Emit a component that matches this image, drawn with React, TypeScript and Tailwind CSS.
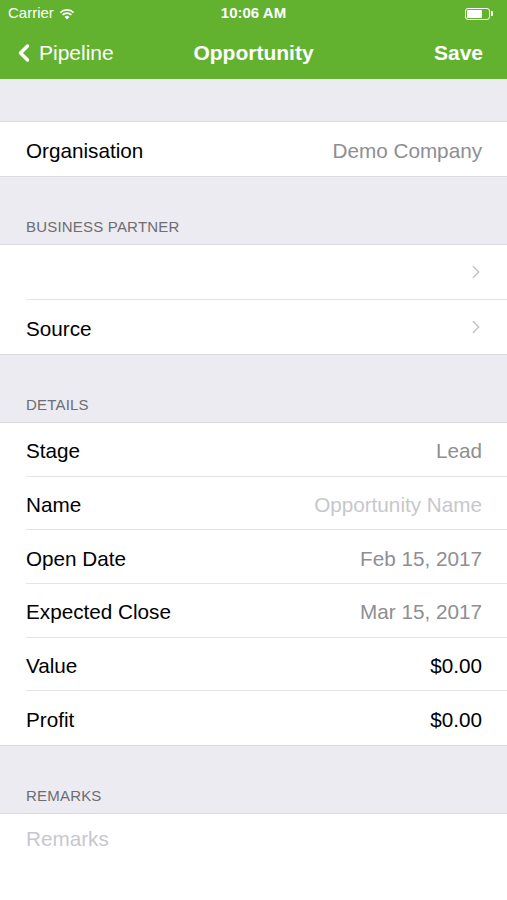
import { ChevronLeft, ChevronRight } from "lucide-react";

interface Row {
  label: string;
  value: string;
  tone: "dark" | "gray" | "hint";
}

const details: Row[] = [
  { label: "Stage", value: "Lead", tone: "gray" },
  { label: "Name", value: "Opportunity Name", tone: "hint" },
  { label: "Open Date", value: "Feb 15, 2017", tone: "gray" },
  { label: "Expected Close", value: "Mar 15, 2017", tone: "gray" },
  { label: "Value", value: "$0.00", tone: "dark" },
  { label: "Profit", value: "$0.00", tone: "dark" },
];

const toneClass = {
  dark: "text-black",
  gray: "text-[#8e8e93]",
  hint: "text-[#c7c7cd]",
};

function SectionHeader({ title }: { title: string }) {
  return (
    <div className="h-[68px] bg-[#ebebf1] px-[26px] flex items-end pb-[6px] border-b border-[#dcdce0]">
      <span className="text-[15px] text-[#6d6d72] tracking-[0.2px]">{title}</span>
    </div>
  );
}

function Cell({
  label,
  value,
  tone = "gray",
  chevron,
  last,
  h = "h-[55px]",
}: {
  label: string;
  value?: string;
  tone?: "dark" | "gray" | "hint";
  chevron?: boolean;
  last?: boolean;
  h?: string;
}) {
  return (
    <div className={`bg-white pl-[26px] ${h}`}>
      <div
        className={`flex items-center justify-between h-full pr-[25px] ${
          last ? "" : "border-b border-[#e4e4e8]"
        }`}
      >
        <span className="text-[20.7px] text-black pt-[3px]">{label}</span>
        {chevron ? (
          <ChevronRight className="w-[22px] h-[22px] text-[#c4c4c9] -mr-[5px]" strokeWidth={1.7} />
        ) : (
          <span className={`text-[20.7px] pt-[3px] ${toneClass[tone]}`}>{value}</span>
        )}
      </div>
    </div>
  );
}

export default function App() {
  return (
    <main
      className="w-[507px] h-[900px] bg-white overflow-hidden"
      style={{ fontFamily: "'Liberation Sans', Arial, sans-serif" }}
    >
      {/* Status bar + nav */}

      <div className="bg-[#62b22f] text-white">
        <div className="h-[27px] flex items-center justify-between px-[8px] text-[15px]">
          <div className="flex items-center gap-[5px] w-[150px]">
            <span>Carrier</span>
            <svg width="16" height="12" viewBox="0 0 16 12">
              <path d="M8 11.5 L5.6 8.9 A3.4 3.4 0 0 1 10.4 8.9 Z" fill="white" />
              <path d="M3.6 6.9 A6.3 6.3 0 0 1 12.4 6.9" stroke="white" strokeWidth="1.6" fill="none" />
              <path d="M1.4 4.6 A9.4 9.4 0 0 1 14.6 4.6" stroke="white" strokeWidth="1.6" fill="none" />
            </svg>
          </div>
          <span className="font-bold">10:06 AM</span>
          <div className="w-[150px] flex justify-end items-center pr-[6px]">
            <div className="w-[25px] h-[12px] border border-white rounded-[3px] p-[1px]">
              <div className="w-[15px] h-full bg-white rounded-[1px]" />
            </div>
            <div className="w-[2px] h-[5px] bg-white rounded-r-[1px] ml-[1px]" />
          </div>
        </div>

        <div className="h-[52px] flex items-center justify-between px-[12px] relative">
          <div className="flex items-center text-[21px]">
            <ChevronLeft className="w-[28px] h-[32px] -ml-[2px]" strokeWidth={3} />
            <span className="ml-[1px]">Pipeline</span>
          </div>
          <span className="absolute left-0 right-0 text-center text-[21px] font-bold pointer-events-none">
            Opportunity
          </span>
          <span className="text-[21px] font-bold pr-[12px]">Save</span>
        </div>
      </div>

      {/* Organisation */}

      <div className="h-[43px] bg-[#ebebf1] border-b border-[#dcdce0]" />

      <div className="border-b border-[#dcdce0]">
        <Cell label="Organisation" value="Demo Company" last h="h-[54px]" />
      </div>

      {/* Business partner */}

      <SectionHeader title="BUSINESS PARTNER" />

      <Cell label="" chevron />
      <div className="border-b border-[#dcdce0]">
        <Cell label="Source" chevron last h="h-[54px]" />
      </div>

      {/* Details */}

      <SectionHeader title="DETAILS" />

      <div className="border-b border-[#dcdce0]">
        {details.map((row, i) => (
          <Cell
            key={row.label}
            label={row.label}
            value={row.value}
            tone={row.tone}
            last={i === details.length - 1}
            h="h-[53.7px]"
          />
        ))}
      </div>

      {/* Remarks */}

      <SectionHeader title="REMARKS" />

      <div className="bg-white px-[26px] pt-[9px]">
        <span className="text-[20.7px] text-[#c7c7cd]">Remarks</span>
      </div>
    </main>
  );
}
